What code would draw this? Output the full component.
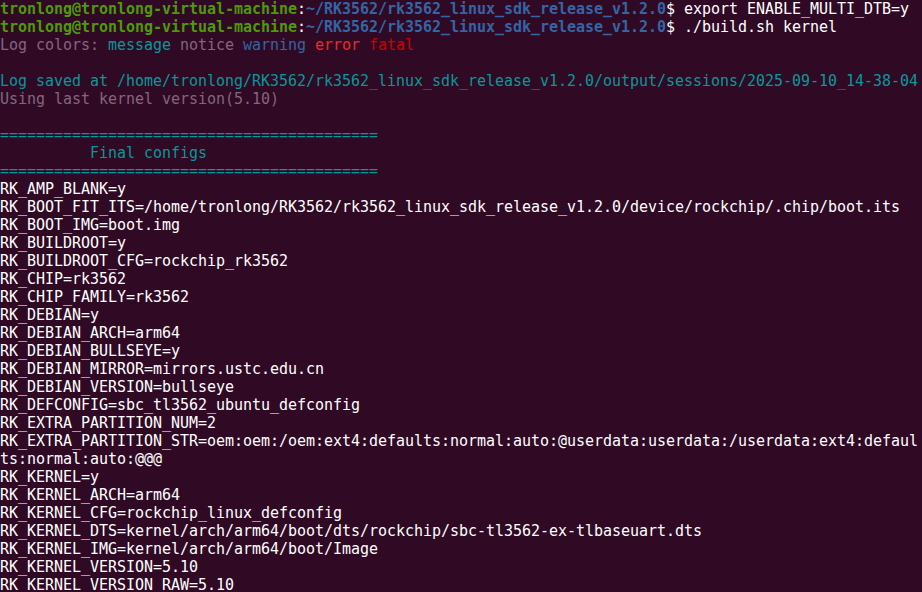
type Seg = { t: string; c?: string };

const W = 'text-[#ffffff]';
const DIM = 'text-[#85657f]';
const CYAN = 'text-[#06989a]';

const prompt = (cmd: string): Seg[] => [
  { t: 'tronlong@tronlong-virtual-machine', c: 'text-[#4e9a06] font-bold' },
  { t: ':', c: W },
  { t: '~/RK3562/rk3562_linux_sdk_release_v1.2.0', c: 'text-[#3465a4] font-bold' },
  { t: '$ ' + cmd, c: W },
];

const configs = [
  'RK_AMP_BLANK=y',
  'RK_BOOT_FIT_ITS=/home/tronlong/RK3562/rk3562_linux_sdk_release_v1.2.0/device/rockchip/.chip/boot.its',
  'RK_BOOT_IMG=boot.img',
  'RK_BUILDROOT=y',
  'RK_BUILDROOT_CFG=rockchip_rk3562',
  'RK_CHIP=rk3562',
  'RK_CHIP_FAMILY=rk3562',
  'RK_DEBIAN=y',
  'RK_DEBIAN_ARCH=arm64',
  'RK_DEBIAN_BULLSEYE=y',
  'RK_DEBIAN_MIRROR=mirrors.ustc.edu.cn',
  'RK_DEBIAN_VERSION=bullseye',
  'RK_DEFCONFIG=sbc_tl3562_ubuntu_defconfig',
  'RK_EXTRA_PARTITION_NUM=2',
  'RK_EXTRA_PARTITION_STR=oem:oem:/oem:ext4:defaults:normal:auto:@userdata:userdata:/userdata:ext4:defaul',
  'ts:normal:auto:@@@',
  'RK_KERNEL=y',
  'RK_KERNEL_ARCH=arm64',
  'RK_KERNEL_CFG=rockchip_linux_defconfig',
  'RK_KERNEL_DTS=kernel/arch/arm64/boot/dts/rockchip/sbc-tl3562-ex-tlbaseuart.dts',
  'RK_KERNEL_IMG=kernel/arch/arm64/boot/Image',
  'RK_KERNEL_VERSION=5.10',
  'RK_KERNEL_VERSION_RAW=5.10',
];

const rule = '==========================================';

const lines: Seg[][] = [
  prompt('export ENABLE_MULTI_DTB=y'),
  prompt('./build.sh kernel'),
  [
    { t: 'Log colors: ', c: DIM },
    { t: 'message', c: CYAN },
    { t: ' notice ', c: DIM },
    { t: 'warning', c: 'text-[#3465a4]' },
    { t: ' ' },
    { t: 'error', c: 'text-[#ef2929]' },
    { t: ' ' },
    { t: 'fatal', c: 'text-[#cc0000]' },
  ],
  [],
  [{ t: 'Log saved at /home/tronlong/RK3562/rk3562_linux_sdk_release_v1.2.0/output/sessions/2025-09-10_14-38-04', c: CYAN }],
  [{ t: 'Using last kernel version(5.10)', c: DIM }],
  [],
  [{ t: rule, c: CYAN }],
  [{ t: '          Final configs', c: CYAN }],
  [{ t: rule, c: CYAN }],
  ...configs.map((t) => [{ t, c: W }]),
];

export default function App() {
  return (
    <div className="w-[922px] h-[592px] overflow-hidden bg-[#300a24] font-['DejaVu_Sans_Mono',monospace] text-[15px] leading-[18px] tracking-[-0.03px] text-white">
      {lines.map((segs, i) => (
        <div key={i} className="h-[18px] whitespace-pre">
          {segs.map((s, j) => (
            <span key={j} className={s.c}>
              {s.t}
            </span>
          ))}
        </div>
      ))}
    </div>
  );
}
